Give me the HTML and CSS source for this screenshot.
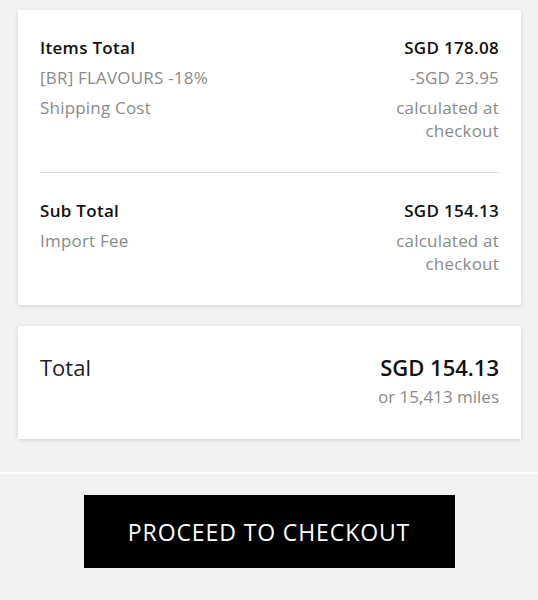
FILE: index.html
```html
<!DOCTYPE html>
<html lang="en">
<head>
    <meta charset="UTF-8">
    <meta name="viewport" content="width=device-width, initial-scale=1.0">
    <title>Order Summary</title>
    <link rel="stylesheet" href="styles.css">
</head>
<body>

    <main class="summary">
        <section class="card">
            <div class="group">
                <div class="row">
                    <span class="label strong">Items Total</span>
                    <span class="value strong">SGD 178.08</span>
                </div>
                <div class="row">
                    <span class="label">[BR] FLAVOURS -18%</span>
                    <span class="value">-SGD 23.95</span>
                </div>
                <div class="row">
                    <span class="label">Shipping Cost</span>
                    <span class="value narrow">calculated at checkout</span>
                </div>
            </div>
            <div class="group">
                <div class="row">
                    <span class="label strong">Sub Total</span>
                    <span class="value strong">SGD 154.13</span>
                </div>
                <div class="row">
                    <span class="label">Import Fee</span>
                    <span class="value narrow">calculated at checkout</span>
                </div>
            </div>
        </section>

        <section class="card total-card">
            <div class="total-row">
                <span class="total-label">Total</span>
                <div class="total-amount">
                    <div class="total-price">SGD 154.13</div>
                    <div class="total-miles">or 15,413 miles</div>
                </div>
            </div>
        </section>
    </main>

    <footer class="checkout">
        <button type="button" class="checkout-btn">PROCEED TO CHECKOUT</button>
    </footer>

</body>
</html>
```

FILE: styles.css
```css
body {
    font-family: "Open Sans", Lato, sans-serif;
    margin: 0;
    background-color: #f2f2f2;
    color: #111;
}

.summary {
    padding: 10px 17px 0 18px;
    display: flex;
    flex-direction: column;
    gap: 21px;
}

.card {
    background-color: #fff;
    padding: 0 22px;
    box-shadow: 0 1px 4px rgba(0, 0, 0, 0.14);
}

.group {
    padding: 26px 0 30px;
    display: flex;
    flex-direction: column;
    gap: 7px;
}

.group + .group {
    border-top: 1px solid #dedede;
    padding-top: 26px;
    padding-bottom: 30px;
}

.row {
    display: flex;
    justify-content: space-between;
    align-items: flex-start;
    font-size: 17px;
    line-height: 23px;
    letter-spacing: 0.2px;
    color: #8a8a8a;
}

.value {
    text-align: right;
}

.narrow {
    max-width: 112px;
}

.strong {
    color: #111;
    font-weight: 600;
    letter-spacing: 0.3px;
}

.total-card {
    padding: 26px 22px 31px;
}

.total-row {
    display: flex;
    justify-content: space-between;
    align-items: flex-start;
}

.total-label {
    font-size: 22px;
    line-height: 30px;
    font-weight: 500;
    color: #222;
}

.total-amount {
    text-align: right;
}

.total-price {
    font-size: 22px;
    line-height: 30px;
    font-weight: 600;
}

.total-miles {
    margin-top: 3px;
    font-size: 17px;
    line-height: 23px;
    color: #8a8a8a;
}

.checkout {
    margin-top: 33px;
    border-top: 2px solid #fff;
    padding-top: 21px;
    display: flex;
    justify-content: center;
}

.checkout-btn {
    background-color: #000;
    color: #fff;
    width: 371px;
    height: 73px;
    border: none;
    font-family: inherit;
    font-size: 23px;
    font-weight: 500;
    letter-spacing: 0.9px;
    cursor: pointer;
}
```
